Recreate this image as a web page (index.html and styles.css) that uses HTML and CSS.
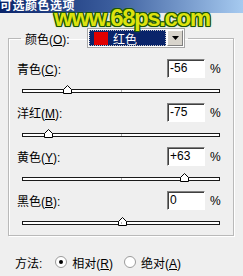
FILE: index.html
```html
<!DOCTYPE html>
<html>
<head>
    <title>可选颜色选项</title>
    <link rel="stylesheet" href="styles.css">
</head>
<body>
    <div class="titlebar">可选颜色选项</div>
    <div class="watermark">www.68ps.com</div>

    <fieldset class="group">
        <legend class="legend">
            <span class="lbl-top">颜色(<u>O</u>):</span>
            <div class="select">
                <div class="sel"><span class="swatch"></span><span>红色</span></div>
                <div class="drop"><svg width="7" height="4" viewBox="0 0 7 4"><polygon points="0,0 7,0 3.5,4" fill="#000"/></svg></div>
            </div>
        </legend>
        <div class="rows">
            <div class="row">
                <div class="field"><span class="lbl">青色(<u>C</u>):</span><div class="num">-56</div><span class="pct">%</span></div>
                <div class="track"><svg class="thumb" style="left: 40px" width="9" height="9" viewBox="0 0 9 9"><polygon points="0.5,8.5 0.5,4.5 4.5,0.5 8.5,4.5 8.5,8.5" fill="#fff" stroke="#000"/></svg></div>
            </div>
            <div class="row">
                <div class="field"><span class="lbl">洋红(<u>M</u>):</span><div class="num">-75</div><span class="pct">%</span></div>
                <div class="track"><svg class="thumb" style="left: 21px" width="9" height="9" viewBox="0 0 9 9"><polygon points="0.5,8.5 0.5,4.5 4.5,0.5 8.5,4.5 8.5,8.5" fill="#fff" stroke="#000"/></svg></div>
            </div>
            <div class="row">
                <div class="field"><span class="lbl">黄色(<u>Y</u>):</span><div class="num">+63</div><span class="pct">%</span></div>
                <div class="track"><svg class="thumb" style="left: 157px" width="9" height="9" viewBox="0 0 9 9"><polygon points="0.5,8.5 0.5,4.5 4.5,0.5 8.5,4.5 8.5,8.5" fill="#fff" stroke="#000"/></svg></div>
            </div>
            <div class="row">
                <div class="field"><span class="lbl">黑色(<u>B</u>):</span><div class="num">0</div><span class="pct">%</span></div>
                <div class="track"><svg class="thumb" style="left: 95px" width="9" height="9" viewBox="0 0 9 9"><polygon points="0.5,8.5 0.5,4.5 4.5,0.5 8.5,4.5 8.5,8.5" fill="#fff" stroke="#000"/></svg></div>
            </div>
        </div>
    </fieldset>

    <div class="method">
        <span>方法:</span>
        <svg class="radio first" width="12" height="12" viewBox="0 0 12 12"><circle cx="6" cy="6" r="5.5" fill="#fff" stroke="#9a9a9a"/><circle cx="6" cy="6" r="2" fill="#000"/></svg>
        <span>相对(<u>R</u>)</span>
        <svg class="radio" width="12" height="12" viewBox="0 0 12 12"><circle cx="6" cy="6" r="5.5" fill="#fff" stroke="#9a9a9a"/></svg>
        <span>绝对(<u>A</u>)</span>
    </div>
</body>
</html>
```

FILE: styles.css
```css
html, body {
    margin: 0;
    padding: 0;
}

body {
    width: 243px;
    height: 276px;
    background-color: #efefef;
    font-family: "Liberation Sans", "Noto Sans CJK SC", sans-serif;
    font-size: 12px;
    color: #000;
    position: relative;
    overflow: hidden;
}

.titlebar {
    height: 13px;
    line-height: 13px;
    background: linear-gradient(to right, #0a246a, #3a5c9c 45%, #a6caf0);
    color: #fff;
    font-weight: bold;
    letter-spacing: 0.5px;
    white-space: nowrap;
}

.watermark {
    position: absolute;
    left: 54px;
    top: 4px;
    font-family: "Liberation Sans", sans-serif;
    font-weight: bold;
    font-size: 24px;
    letter-spacing: -1.4px;
    color: #dde30e;
    text-shadow: 1px 0 0 #1c540a, -1px 0 0 #1c540a, 0 1px 0 #1c540a, 0 -1px 0 #1c540a,
                 1px 1px 0 #1c540a, -1px -1px 0 #1c540a, 1px -1px 0 #1c540a, -1px 1px 0 #1c540a,
                 0 0 3px #6fae3a;
}

.group {
    margin: 15px 0 0 8px;
    padding: 0;
    width: 226px;
    box-sizing: border-box;
    border: 1px solid #b9b9b9;
    box-shadow: 1px 1px 0 #fff, inset 1px 1px 0 #fff;
    min-inline-size: 0;
}

.legend {
    margin-left: 12px;
    padding: 0 3px 0 4px;
    height: 20px;
    display: flex;
    align-items: center;
}

.lbl-top {
    width: 62px;
}

.select {
    display: flex;
    width: 98px;
    height: 20px;
    box-sizing: border-box;
    border: 1px solid #a7a7a7;
    background-color: #fff;
}

.sel {
    flex: 1;
    margin: 1px;
    background-color: #0a246a;
    outline: 1px dotted #c8c8c8;
    outline-offset: -1px;
    display: flex;
    align-items: center;
    color: #fff;
}

.swatch {
    width: 14px;
    height: 13px;
    margin: 0 5px 0 5px;
    background-color: #e00000;
}

.drop {
    width: 16px;
    margin: 1px 1px 1px 0;
    background-color: #d8d4cc;
    border: 1px solid;
    border-color: #fff #808080 #808080 #fff;
    box-sizing: border-box;
    display: flex;
    align-items: center;
    justify-content: center;
}

.rows {
    padding: 11px 0 0 8px;
}

.field {
    display: flex;
    align-items: center;
    height: 19px;
}

.lbl {
    width: 150px;
}

.num {
    width: 38px;
    height: 19px;
    box-sizing: border-box;
    background-color: #fff;
    border: 1px solid;
    border-color: #808080 #fff #fff #808080;
    box-shadow: inset 1px 1px 0 #404040;
    padding-left: 2px;
    line-height: 17px;
}

.pct {
    margin-left: 5px;
}

.track {
    position: relative;
    margin: 11px 0 10px 5px;
    width: 198px;
    height: 4px;
    box-sizing: border-box;
    border: 1px solid #1a1a1a;
    background-color: #fff;
}

.track::after {
    content: "";
    position: absolute;
    left: 98px;
    top: 0;
    width: 1px;
    height: 2px;
    background-color: #b0b0b0;
}

.thumb {
    position: absolute;
    top: -5px;
}

.method {
    margin-top: 19px;
    padding-left: 15px;
    height: 14px;
    display: flex;
    align-items: center;
}

.radio {
    margin: 0 5px 0 11px;
}

.radio.first {
    margin-left: 13px;
}
```
